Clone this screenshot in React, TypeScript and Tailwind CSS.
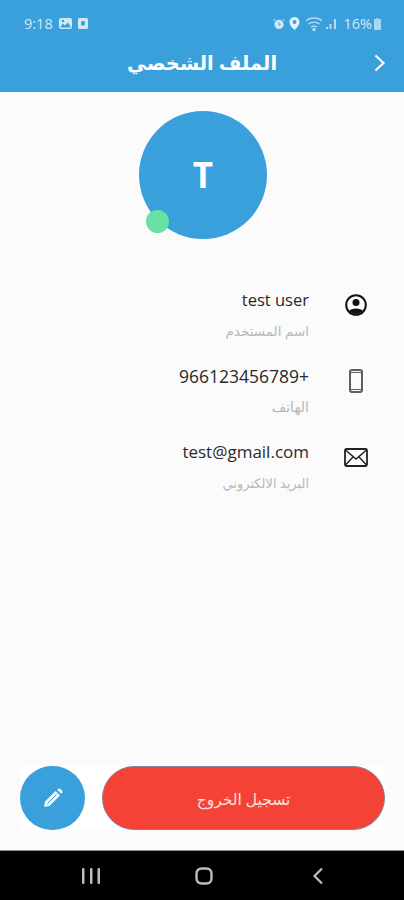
import React from "react";

function ProfileRow({ value, label, icon, valueDir, valueSize, labelSize }: { value: string; label: string; icon: React.ReactNode; valueDir?: "ltr" | "rtl"; valueSize: string; labelSize: string }) {
  return (
    <div className="flex h-[76px] items-start">
      <div className="flex w-[309px] flex-col items-end">
        <div dir={valueDir} className={`h-[28px] leading-[28px] text-[#2a2a2a] ${valueSize}`}>{value}</div>
        <div dir="rtl" className={`mt-[7px] h-[20px] leading-[20px] text-[#b8b8b8] ${labelSize}`}>{label}</div>
      </div>
      <div className="ml-[35px] flex h-[28px] w-[24px] translate-y-[5px] items-center justify-center">{icon}</div>
    </div>
  );
}

export default function App() {
  return (
    <div className="flex h-[900px] w-[404px] flex-col overflow-hidden bg-[#fbfbfb] font-['Open_Sans','DejaVu_Sans',sans-serif]">
      <header className="h-[92px] shrink-0 bg-[#3aa0dc] text-white">
        <div className="flex h-[46px] items-center justify-between pl-[24px] pr-[22px] pt-[1px] text-[14.500px] text-[#cfe8f6]">
          <div className="flex items-center">
            <span>9:18</span>
            <svg className="ml-[6px]" width="13" height="11" viewBox="0 0 13 11"><rect width="13" height="11" rx="2" fill="#cfe8f6" /><path d="M1 9.500l3-4 2 2 3-3 3 5z" fill="#3aa0dc" /><circle cx="4" cy="3" r="1.300" fill="#3aa0dc" /></svg>
            <svg className="ml-[6px]" width="10" height="11" viewBox="0 0 10 11"><rect width="10" height="11" rx="1.500" fill="#cfe8f6" /><rect x="3" y="3" width="4" height="4.500" rx="1.500" fill="#3aa0dc" /></svg>
          </div>
          <div className="flex items-center">
            <svg width="12" height="12" viewBox="0 0 13 12"><circle cx="6.500" cy="6.500" r="5" fill="#cfe8f6" /><path d="M6.500 4v3h2" stroke="#3aa0dc" fill="none" /><path d="M0.500 3l2-2.500M12.500 3l-2-2.500" stroke="#cfe8f6" /></svg>
            <svg className="ml-[4px]" width="11" height="13" viewBox="0 0 11 13"><path d="M5.500 0a5 5 0 0 1 5 5c0 3-3 6-5 8-2-2-5-5-5-8a5 5 0 0 1 5-5z" fill="#e3f2fb" /><circle cx="5.500" cy="5" r="2" fill="#3aa0dc" /></svg>
            <svg className="ml-[5px]" width="18" height="14" viewBox="0 0 18 14" fill="none" stroke="#b5dcf2" strokeWidth="1.400"><path d="M1 4c4-4 12-4 16 0M3.500 7c3-2.500 8-2.500 11 0M6 10c1.500-1 4.500-1 6 0" /><circle cx="9" cy="12.500" r="1" fill="#b5dcf2" /></svg>
            <svg className="ml-[3px]" width="10" height="12" viewBox="0 0 10 12" fill="#b5dcf2"><rect x="0" y="9" width="2" height="2" /><rect x="3.500" y="6" width="2" height="5" /><rect x="8" y="1" width="2" height="10" /></svg>
            <span className="ml-[7px]">16%</span>
            <svg className="ml-[1px]" width="9" height="12" viewBox="0 0 9 12"><path d="M3.500 0h2v1h2.500v11H1V1h2.500z" fill="#a9d6f0" /></svg>
          </div>
        </div>
        <div className="relative flex h-[34px] items-center justify-center">
          <h1 dir="rtl" className="text-[19.500px] font-bold leading-[34px]">الملف الشخصي</h1>
          <svg className="absolute right-[17px] top-[7px]" width="14" height="20" viewBox="0 0 14 20" fill="none" stroke="white" strokeWidth="2.200"><path d="M2.500 2.500l8 7.500-8 7.500" /></svg>
        </div>
      </header>

      <main className="flex flex-1 flex-col">
        <div className="relative ml-[139px] mt-[19px] flex h-[128px] w-[128px] items-center justify-center rounded-full bg-[#3aa0dc] text-[35px] font-bold text-white">
          T
          <span className="absolute bottom-[6px] left-[7px] h-[23px] w-[23px] rounded-full bg-[#66e0a3]" />
        </div>

        <div className="mt-[47px]">
          <ProfileRow
            value="test user"
            valueSize="text-[16.500px]"
            labelSize="text-[13.500px]"
            label="اسم المستخدم"
            icon={
              <svg width="22" height="22" viewBox="0 0 22 22"><circle cx="11" cy="11" r="9.800" fill="none" stroke="#111" strokeWidth="2" /><circle cx="11" cy="8.500" r="3.500" fill="#111" /><path d="M4 17c2-3.500 12-3.500 14 0-3 4-11 4-14 0z" fill="#111" /></svg>
            }
          />
          <ProfileRow
            value="+966123456789"
            valueDir="rtl"
            valueSize="text-[17.500px]"
            labelSize="text-[14px]"
            label="الهاتف"
            icon={
              <svg width="14" height="24" viewBox="0 0 14 24" fill="none" stroke="#5f5f5f" strokeWidth="2"><rect x="1" y="1" width="12" height="22" rx="2" /><path d="M1 3.500h12M1 20.500h12" strokeWidth="1" /></svg>
            }
          />
          <ProfileRow
            value="test@gmail.com"
            valueSize="text-[17px]"
            labelSize="text-[13px]"
            label="البريد الالكتروني"
            icon={
              <svg width="24" height="19" viewBox="0 0 24 19" fill="none" stroke="#222" strokeWidth="1.800"><rect x="1" y="1" width="22" height="17" rx="1.500" /><path d="M1.500 2l10.500 9 10.500-9M1.500 17l7.500-8M22.500 17l-7.500-8" strokeWidth="1.500" /></svg>
            }
          />
        </div>

        <div className="mb-[20px] ml-[20px] mt-auto flex h-[64px] w-[365px] items-center justify-between bg-white">
          <button className="flex h-[64px] w-[65px] items-center justify-center rounded-full bg-[#3aa0dc]">
            <svg width="20" height="20" viewBox="0 0 20 20"><path d="M1 19l1-5.500L12.500 3l4.500 4.500L6.500 18z" fill="#eef7fc" /><path d="M4.500 15.500l9-9" stroke="#3aa0dc" strokeWidth="1" /><path d="M14.200 1.800l.8-.8a1.800 1.800 0 0 1 2.500 0l1.500 1.500a1.800 1.800 0 0 1 0 2.500l-.8.800z" fill="#eef7fc" /></svg>
          </button>
          <button dir="rtl" className="flex h-[64px] w-[283px] items-center justify-center rounded-full border border-[#8a7f9a] bg-[#f44336] pt-[3px] text-[15.500px] text-[#fde0dc]">
            تسجيل الخروج
          </button>
        </div>
      </main>

      <nav className="flex h-[50px] shrink-0 items-center border-t border-t-[#888] bg-black pl-[82px]">
        <svg width="18" height="16" viewBox="0 0 18 16" fill="#bdbdbd"><rect x="0" y="0" width="2.500" height="16" rx="1" /><rect x="8" y="0" width="2.500" height="16" rx="1" /><rect x="15.500" y="0" width="2.500" height="16" rx="1" /></svg>
        <svg className="ml-[95px]" width="18" height="18" viewBox="0 0 18 18" fill="none" stroke="#bdbdbd" strokeWidth="2.400"><rect x="1.500" y="1.500" width="15" height="15" rx="5" /></svg>
        <svg className="ml-[99px]" width="12" height="18" viewBox="0 0 12 18" fill="none" stroke="#bdbdbd" strokeWidth="2.200"><path d="M10 1.500L2.500 9l7.500 7.500" /></svg>
      </nav>
    </div>
  );
}
